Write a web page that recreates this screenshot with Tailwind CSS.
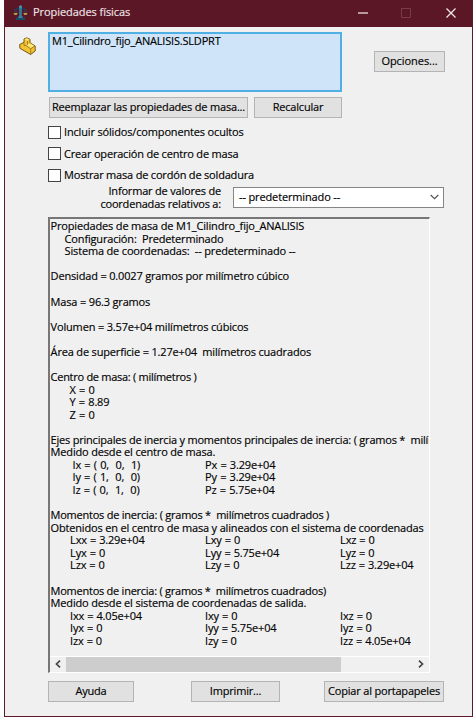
<!DOCTYPE html>
<html lang="es">
<head>
<meta charset="utf-8">
<title>Propiedades físicas</title>
<script src="https://cdn.jsdelivr.net/npm/@tailwindcss/browser@4"></script>
</head>
<body class="h-[722px] w-[474px] overflow-hidden bg-white pl-1 font-['Open_Sans','Noto_Sans',sans-serif] text-[11px] leading-[12.57px] tracking-[-0.19px] text-black [-webkit-text-stroke:0.15px]">
<div class="flex h-[717px] w-[469px] flex-col overflow-hidden border-x border-b border-[#5e1a2b] bg-[#f0f0f0]">
  <header class="flex h-[27px] shrink-0 items-center bg-[#5c1727] pb-[2px] pl-[8px] text-[#eee4e6]">
    <svg class="h-[15px] w-[15px]" viewBox="0 0 15 15"><path d="M1.500 5Q7.500 2 13.500 5" fill="none" stroke="#173f59" stroke-width="1.500"/><path d="M7.500 1v11" stroke="#2f7fa4" stroke-width="2.600"/><path d="M3 12.500h9V15H3z" fill="#174a66"/><path d="M5.500 11h4v2h-4z" fill="#3285a8"/><path d="M2.500 5L1 8M2.500 5L4 8M12.500 5L11 8M12.500 5L14 8" stroke="#244a5e" stroke-width=".8"/><path d="M.5 8h4.200l-1 2H1.500zM10.300 8h4.200l-1 2h-2.200z" fill="#b99a45"/><circle cx="7.500" cy="1.800" r="1.500" fill="#4593b3"/></svg>
    <h1 class="ml-[5px] w-[325px] whitespace-nowrap tracking-[-0.06px]">Propiedades físicas</h1>
    <svg class="h-3 w-[100px]" viewBox="0 0 100 12" fill="none"><path d="M0 6h10" stroke="#cdb9be" stroke-width="1.600"/><path d="M43.500 1.500h9v9h-9z" stroke="#7a3c49"/><path d="M88.500 1.500l9 9m0-9l-9 9" stroke="#efe6e8" stroke-width="1.300"/></svg>
  </header>
  <main class="flex flex-col pl-[43px] pt-[5px]">
    <div class="flex h-[60px]">
      <svg class="-ml-[29px] mr-3 mt-[5px] h-[19px] w-[17px] shrink-0" viewBox="0 0 17 19"><path d="M.7 7.500L5 5.300V2L7.500.8 11 2.300v3.500L16.200 9v5L11.700 17.500.9 11.300z" fill="#f2c230" stroke="#75591a" stroke-linejoin="round"/><path d="M5.500 2.300L7.500 1.300l3 1.200-2 1.300zM7.500 8.300l3.500-2 4.500 2.800-4 2.500z" fill="#ffe873"/><path d="M8.500 4v3.800M7 8.500l4.700 3.200L16 9M11.700 11.700v5.500M5 5.500v3L7 8.500" fill="none" stroke="#8f701f" stroke-width=".8"/></svg>
      <div class="h-[60px] w-[294px] whitespace-nowrap border-2 border-[#50b0e4] bg-[#cfe4f8] pl-[2px] pt-[1px]">M1_Cilindro_fijo_ANALISIS.SLDPRT</div>
      <button class="ml-8 mt-[19px] h-[21px] w-[71px] border border-[#b4b4b4] bg-[#e1e1e1] tracking-[-0.05px]">Opciones...</button>
    </div>
    <div class="mt-[5px] flex gap-[6px] pl-[1px]">
      <button class="h-[21px] w-[199px] whitespace-nowrap border border-[#b4b4b4] bg-[#e1e1e1]">Reemplazar las propiedades de masa...</button>
      <button class="h-[21px] w-[88px] border border-[#b4b4b4] bg-[#e1e1e1]">Recalcular</button>
    </div>
    <div class="mt-2 flex flex-col gap-2">
      <label class="flex h-[13.300px] items-center gap-[3px] tracking-[-0.16px]"><i class="size-[13px] border border-[#444] bg-white"></i><span>Incluir sólidos/componentes ocultos</span></label>
      <label class="flex h-[13.300px] items-center gap-[3px]"><i class="size-[13px] border border-[#444] bg-white"></i><span>Crear operación de centro de masa</span></label>
      <label class="flex h-[13.300px] items-center gap-[3px]"><i class="size-[13px] border border-[#444] bg-white"></i><span>Mostrar masa de cordón de soldadura</span></label>
    </div>
    <div class="mt-[5px] flex h-[21px]">
      <p class="-mt-[3px] w-[173px] whitespace-nowrap text-right leading-[13px]">Informar de valores de<br>coordenadas relativos a:</p>
      <div class="ml-3 flex h-[21px] w-[211px] items-center justify-between border border-[#858585] bg-white pl-[5px] pr-1"><span class="tracking-[-0.14px]">-- predeterminado --</span><svg class="h-[6px] w-[9px]" viewBox="0 0 9 6" fill="none"><path d="M.7 1L4.500 4.700 8.300 1" stroke="#555" stroke-width="1.200"/></svg></div>
    </div>
    <section class="mt-[9px] flex h-[456px] w-[382px] flex-col border-b border-l-2 border-r border-t-2 border-b-white border-l-[#777] border-r-white border-t-[#777]">
      <div class="h-[437px] overflow-hidden pl-[0.600px] pt-[1.300px] tracking-[-0.17px] [&_p]:whitespace-pre">
        <p>Propiedades de masa de M1_Cilindro_fijo_ANALISIS</p>
        <p class="pl-[14px]">Configuración:  Predeterminado</p>
        <p class="pl-[14px]">Sistema de coordenadas:  -- predeterminado --</p>
        <p class="mt-[12.570px]">Densidad = 0.0027 gramos por milímetro cúbico</p>
        <p class="mt-[12.570px]">Masa = 96.3 gramos</p>
        <p class="mt-[12.570px]">Volumen = 3.57e+04 milímetros cúbicos</p>
        <p class="mt-[12.570px]">Área de superficie = 1.27e+04  milímetros cuadrados</p>
        <p class="mt-[12.570px] tracking-[-0.28px]">Centro de masa: ( milímetros )</p>
        <div class="pl-[19px] [word-spacing:0.6px]"><p>X = 0</p><p>Y = 8.89</p><p>Z = 0</p></div>
        <p class="mt-[12.570px] tracking-[-0.21px]">Ejes principales de inercia y momentos principales de inercia: ( gramos *  milímetros cuadrados )</p>
        <p>Medido desde el centro de masa.</p>
        <div class="grid grid-cols-[132.500px_135px] pl-[22px] [word-spacing:0.6px]"><p>Ix = ( 0,  0,  1)</p><p>Px = 3.29e+04</p><p>Iy = ( 1,  0,  0)</p><p>Py = 3.29e+04</p><p>Iz = ( 0,  1,  0)</p><p>Pz = 5.75e+04</p></div>
        <p class="mt-[12.570px] tracking-[-0.24px]">Momentos de inercia: ( gramos *  milímetros cuadrados )</p>
        <p>Obtenidos en el centro de masa y alineados con el sistema de coordenadas</p>
        <div class="grid grid-cols-[135px_135px_100px] pl-[19.500px] [word-spacing:0.4px]"><p>Lxx = 3.29e+04</p><p>Lxy = 0</p><p>Lxz = 0</p><p>Lyx = 0</p><p>Lyy = 5.75e+04</p><p>Lyz = 0</p><p>Lzx = 0</p><p>Lzy = 0</p><p>Lzz = 3.29e+04</p></div>
        <p class="mt-[12.570px] tracking-[-0.25px]">Momentos de inercia: ( gramos *  milímetros cuadrados)</p>
        <p>Medido desde el sistema de coordenadas de salida.</p>
        <div class="grid grid-cols-[135px_135px_100px] pl-[19.500px] [word-spacing:0.4px]"><p>Ixx = 4.05e+04</p><p>Ixy = 0</p><p>Ixz = 0</p><p>Iyx = 0</p><p>Iyy = 5.75e+04</p><p>Iyz = 0</p><p>Izx = 0</p><p>Izy = 0</p><p>Izz = 4.05e+04</p></div>
      </div>
      <div class="flex h-[16px] items-center border-t border-white pr-[5px]">
        <svg class="mx-[5px] h-[8px] w-[6px]" viewBox="0 0 6 8" fill="none"><path d="M5 .7L1.500 4 5 7.300" stroke="#444" stroke-width="1.700"/></svg>
        <i class="h-[15px] w-[275px] bg-[#cdcdcd]"></i>
        <svg class="ml-auto h-[8px] w-[6px]" viewBox="0 0 6 8" fill="none"><path d="M1 .7L4.500 4 1 7.300" stroke="#444" stroke-width="1.700"/></svg>
      </div>
    </section>
    <footer class="mt-2 flex">
      <button class="h-[21px] w-[86px] border border-[#b4b4b4] bg-[#e1e1e1]">Ayuda</button>
      <button class="ml-[57px] h-[21px] w-[89px] border border-[#b4b4b4] bg-[#e1e1e1]">Imprimir...</button>
      <button class="ml-[44px] h-[21px] w-[120px] whitespace-nowrap border border-[#b4b4b4] bg-[#e1e1e1]">Copiar al portapapeles</button>
    </footer>
  </main>
</div>
</body>
</html>
